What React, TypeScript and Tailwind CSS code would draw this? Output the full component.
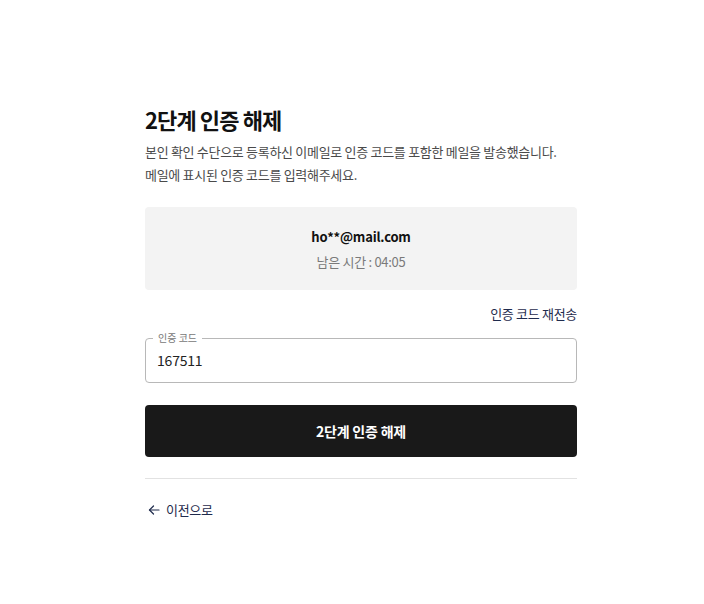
import React from 'react'

const font = { fontFamily: '"Noto Sans CJK KR", "Noto Sans", sans-serif' }

function ArrowLeft() {
    return (
        <svg width="12" height="12" viewBox="0 0 12 12" fill="none" stroke="currentColor" strokeWidth="1.2" strokeLinecap="round" strokeLinejoin="round">
            <path d="M11 6H1.5" />
            <path d="M5.5 2L1.5 6L5.5 10" />
        </svg>
    )
}

export default function App() {
    return (
        <main className="min-h-screen w-full bg-white" style={font}>
            <div className="ml-[145px] flex w-[432px] flex-col pt-[102px]">
                <h1 className="text-[22px] font-bold leading-[34px] tracking-[-0.9px] text-[#111111]">2단계 인증 해제</h1>
                <p className="mt-[4px] text-[13px] leading-[23px] tracking-[-0.3px] text-[#4a4a4a]">
                    본인 확인 수단으로 등록하신 이메일로 인증 코드를 포함한 메일을 발송했습니다.
                    <br />
                    메일에 표시된 인증 코드를 입력해주세요.
                </p>

                <div className="mt-[21px] flex h-[83px] flex-col items-center justify-center rounded-[4px] bg-[#f3f3f3]">
                    <div className="text-[13px] font-bold leading-[20px] tracking-[-0.2px] text-[#111111]">ho**@mail.com</div>
                    <div className="mt-[6px] text-[13px] leading-[18px] tracking-[-0.3px] text-[#7a7a7a]">남은 시간 : 04:05</div>
                </div>

                <div className="mt-[15px] flex justify-end">
                    <button className="text-[13px] leading-[18px] tracking-[-0.3px] text-[#1f2b4d]">인증 코드 재전송</button>
                </div>

                <div className="relative mt-[15px] h-[45px] rounded-[4px] border border-[#b8b8b8]">
                    <span className="absolute left-[7px] top-[-7px] bg-white px-[5px] text-[10px] leading-[12px] text-[#777777]">인증 코드</span>
                    <div className="flex h-full items-center px-[11px] text-[14px] tracking-[-0.2px] text-[#222222]">167511</div>
                </div>

                <button className="mt-[22px] flex h-[52px] items-center justify-center rounded-[4px] bg-[#191919] text-[14px] font-bold tracking-[-0.2px] text-white">
                    2단계 인증 해제
                </button>

                <div className="mt-[21px] h-px bg-[#e2e2e2]" />

                <button className="mt-[21px] flex items-center gap-[6px] self-start pl-[3px] text-[13px] leading-[20px] tracking-[-0.3px] text-[#1f2b4d]">
                    <ArrowLeft />
                    <span>이전으로</span>
                </button>
            </div>
        </main>
    )
}
